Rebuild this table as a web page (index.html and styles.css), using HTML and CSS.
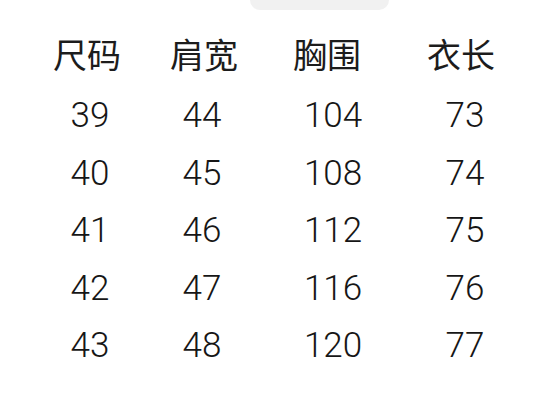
FILE: index.html
```html
<!DOCTYPE html>
<html lang="zh">
<head>
<meta charset="utf-8">
<link rel="stylesheet" href="styles.css">
</head>
<body>
<div class="handle"></div>
<div class="table">
  <div class="cell head">尺码</div><div class="cell head">肩宽</div><div class="cell head">胸围</div><div class="cell head">衣长</div>
  <div class="cell c1">39</div><div class="cell c2">44</div><div class="cell c3">104</div><div class="cell c4">73</div>
  <div class="cell c1">40</div><div class="cell c2">45</div><div class="cell c3">108</div><div class="cell c4">74</div>
  <div class="cell c1">41</div><div class="cell c2">46</div><div class="cell c3">112</div><div class="cell c4">75</div>
  <div class="cell c1">42</div><div class="cell c2">47</div><div class="cell c3">116</div><div class="cell c4">76</div>
  <div class="cell c1">43</div><div class="cell c2">48</div><div class="cell c3">120</div><div class="cell c4">77</div>
</div>
</body>
</html>
```
FILE: styles.css
```css
html, body {
  margin: 0;
  padding: 0;
  background: #ffffff;
}
body {
  width: 546px;
  height: 419px;
  overflow: hidden;
  font-family: Roboto, "Noto Sans CJK SC", sans-serif;
  color: #161616;
}
.handle {
  width: 139px;
  height: 10px;
  margin-left: 250px;
  background: #f1f1f1;
  border-radius: 0 0 14px 14px;
}
.table {
  display: grid;
  grid-template-columns: 124px 110px 136px 132px;
  margin-left: 25px;
  padding-top: 17px;
}
.cell {
  text-align: center;
  font-size: 35px;
  font-weight: 300;
  line-height: 57.5px;
  height: 57.5px;
}
.head {
  font-size: 34px;
  font-weight: 400;
  line-height: 58px;
  height: 60px;
  color: #1c1c1c;
}
.c1 { padding-left: 6px; }
.c2 { padding-right: 4px; }
.c3 { padding-left: 12px; }
.c4 { padding-left: 8px; }
```
